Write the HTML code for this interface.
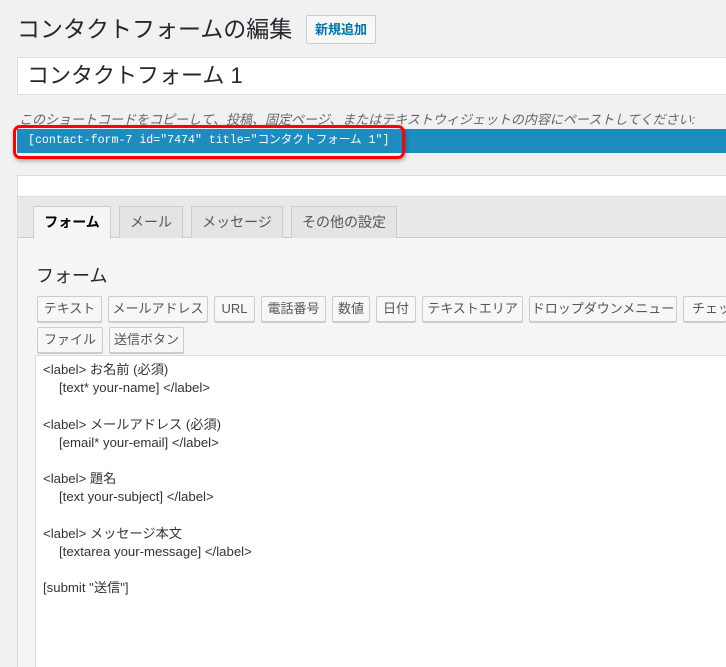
<!DOCTYPE html>
<html><head><meta charset="utf-8"><style>
*{box-sizing:border-box;margin:0;padding:0}
html,body{width:726px;height:667px;overflow:hidden}
body{background:#f1f1f1;font-family:"Liberation Sans","Noto Sans CJK JP",sans-serif;color:#23282d;position:relative}
.abs{position:absolute}
h1{position:absolute;left:17px;top:13px;font-size:23px;font-weight:400;color:#23282d;line-height:32px;white-space:nowrap}
.new{left:306px;top:15px;width:70px;height:29px;border:1px solid #ccc;background:#f7f7f7;border-radius:2px;font-size:13px;font-weight:700;color:#0073aa;text-align:center;line-height:27px}
.title{left:17px;top:57px;width:709px;height:38px;background:#fff;border:1px solid #ddd;border-right:none;font-size:22px;line-height:36px;padding-left:9px;white-space:nowrap}
.desc{left:19px;top:109px;font-size:13px;font-style:italic;color:#666;white-space:nowrap}
.sc{left:17px;top:129px;width:709px;height:24px;background:#1e8cbe;color:#fff;font-family:"Liberation Mono","Noto Sans CJK JP",monospace;font-size:11.6px;line-height:24px;padding-left:11px;white-space:nowrap;overflow:hidden}
.red{left:13px;top:125px;width:392px;height:34px;border:3px solid #f00;border-radius:7px;box-shadow:1px 2px 4px rgba(0,0,0,.3)}
.panel{left:17px;top:175px;width:709px;height:492px;border:1px solid #ddd;border-right:none;border-bottom:none;background:#fff}
.tabbar{left:18px;top:196px;width:708px;height:42px;background:#e9e9e9;border-top:1px solid #ddd;border-bottom:1px solid #ccc}
.content{left:18px;top:238px;width:708px;height:429px;background:#f5f5f5}
.tab{top:206px;height:32px;border:1px solid #ccc;border-bottom:none;background:#e4e4e4;font-size:14px;color:#555;text-align:center;line-height:30px;white-space:nowrap}
.tab.on{background:#f5f5f5;color:#000;font-weight:700;height:33px}
h2{position:absolute;left:36px;top:262px;font-size:18px;font-weight:400;color:#23282d;white-space:nowrap}
.b{height:26px;border:1px solid #ccc;background:#f7f7f7;border-radius:2px;font-size:13px;color:#555;line-height:24px;text-align:center;white-space:nowrap;overflow:hidden;box-shadow:0 1px 0 #ccc}
.ta{left:35px;top:355px;width:691px;height:312px;background:#fff;border:1px solid #ddd;border-right:none;border-bottom:none}
pre{position:absolute;left:43px;top:361px;font-family:"Liberation Sans","Noto Sans CJK JP",sans-serif;font-size:13.2px;line-height:18.2px;color:#333}
.in{padding-left:16px}
</style></head><body>
<h1>コンタクトフォームの編集</h1>
<div class="abs new">新規追加</div>
<div class="abs title">コンタクトフォーム 1</div>
<div class="abs desc">このショートコードをコピーして、投稿、固定ページ、またはテキストウィジェットの内容にペーストしてください:</div>
<div class="abs sc">[contact-form-7 id="7474" title="コンタクトフォーム 1"]</div>
<div class="abs red"></div>
<div class="abs panel"></div>
<div class="abs tabbar"></div>
<div class="abs content"></div>
<div class="abs tab on" style="left:33px;width:78px">フォーム</div>
<div class="abs tab" style="left:119px;width:64px">メール</div>
<div class="abs tab" style="left:191px;width:92px">メッセージ</div>
<div class="abs tab" style="left:291px;width:106px">その他の設定</div>
<h2>フォーム</h2>
<div class="abs b" style="left:37px;top:296px;width:65px">テキスト</div>
<div class="abs b" style="left:108px;top:296px;width:100px">メールアドレス</div>
<div class="abs b" style="left:214px;top:296px;width:41px">URL</div>
<div class="abs b" style="left:261px;top:296px;width:65px">電話番号</div>
<div class="abs b" style="left:332px;top:296px;width:38px">数値</div>
<div class="abs b" style="left:376px;top:296px;width:40px">日付</div>
<div class="abs b" style="left:422px;top:296px;width:101px">テキストエリア</div>
<div class="abs b" style="left:529px;top:296px;width:148px">ドロップダウンメニュー</div>
<div class="abs b" style="left:683px;top:296px;width:43px;text-align:left;padding-left:8px;border-right:none">チェックボックス</div>
<div class="abs b" style="left:37px;top:327px;width:66px">ファイル</div>
<div class="abs b" style="left:109px;top:327px;width:75px">送信ボタン</div>
<div class="abs ta"></div>
<pre>&lt;label&gt; お名前 (必須)
<span class="in">[text* your-name] &lt;/label&gt;</span>

&lt;label&gt; メールアドレス (必須)
<span class="in">[email* your-email] &lt;/label&gt;</span>

&lt;label&gt; 題名
<span class="in">[text your-subject] &lt;/label&gt;</span>

&lt;label&gt; メッセージ本文
<span class="in">[textarea your-message] &lt;/label&gt;</span>

[submit "送信"]</pre>
</body></html>
